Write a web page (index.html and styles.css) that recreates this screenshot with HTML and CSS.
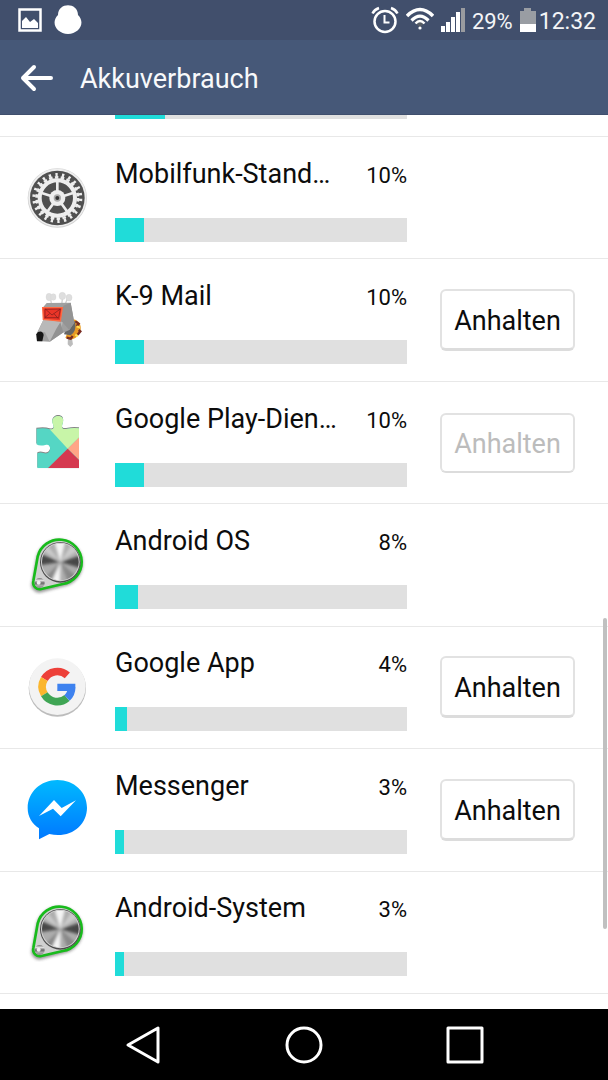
FILE: index.html
```html
<!DOCTYPE html>
<html lang="de">
<head>
<meta charset="utf-8">
<meta name="viewport" content="width=device-width, initial-scale=1">
<title>Akkuverbrauch</title>
<link rel="stylesheet" href="styles.css">
</head>
<body>
<svg class="defs" aria-hidden="true">
  <defs>
    <linearGradient id="steel" x1="0" y1="0" x2="0" y2="1">
      <stop offset="0" stop-color="#777"/><stop offset=".25" stop-color="#ddd"/><stop offset=".5" stop-color="#666"/><stop offset=".75" stop-color="#aaa"/><stop offset="1" stop-color="#888"/>
    </linearGradient>
    <filter id="soft" x="-20%" y="-20%" width="140%" height="140%"><feGaussianBlur stdDeviation="4"/></filter>
    <clipPath id="disc"><circle cx="151" cy="141" r="55"/></clipPath>
    <symbol id="pulley" viewBox="51 60 180 180">
      <path d="M70 200L83 127A67 67 0 1 1 158 211L94 228A20 20 0 0 1 70 200Z" fill="#333" stroke="#333" stroke-width="8" opacity=".5" filter="url(#soft)"/>
      <path d="M70 198L83 125A67 67 0 1 1 158 207L94 222A20 20 0 0 1 70 198Z" fill="#d0d0d0" stroke="#18bb1c" stroke-width="8"/>
      <circle cx="151" cy="142" r="61" fill="#4c4c4c"/>
      <circle cx="151" cy="141" r="58" fill="#d2d2d2"/>
      <g clip-path="url(#disc)">
        <path d="M90 80h122v122H90z" fill="#adadad"/>
        <g filter="url(#soft)">
          <path d="M151 141L80 112V152ZM151 141L222 118V162Z" fill="#474747"/>
          <path d="M151 141L130 70H168ZM151 141L110 212H150Z" fill="#f4f4f4"/>
          <path d="M151 141L94 198L116 218ZM151 141L178 212L205 190Z" fill="#888"/>
          <path d="M151 141L190 80L214 100ZM151 141L90 100L104 80Z" fill="#ccc"/>
        </g>
      </g>
      <circle cx="89" cy="204" r="15" fill="url(#steel)"/>
      <circle cx="86" cy="203" r="6" fill="#eee"/>
    </symbol>
  </defs>
</svg>
<div class="screen">
  <div class="status">
    <div class="status-group notices">
      <svg width="24" height="24" viewBox="0 0 24 24" fill="none"><path d="M1.5 1.5h21v21h-21z" stroke="#fff" stroke-width="2.5"/><path d="M4 20v-7l4-4 4 5 4-3 4 4v5z" fill="#fff"/></svg>
      <svg width="28" height="30" viewBox="0 0 28 30"><path d="M4 10C4-3 24-3 24 10C32 18 25 29 14 29S-4 18 4 10Z" fill="#fff"/></svg>
    </div>
    <div class="status-group">
      <svg width="28" height="28" viewBox="0 0 28 28" fill="none" stroke="#fff"><circle cx="14" cy="15.5" r="10.5" stroke-width="2.5"/><path d="M13.500 9v7.500h5" stroke-width="2"/><path d="M1.500 7.500C3 4.500 5 3 8 2M26.500 7.500C25 4.500 23 3 20 2" stroke-width="2.500"/></svg>
      <svg width="28" height="28" viewBox="1 1 28 28" fill="none" stroke="#fff"><path d="M2 11Q15-2 28 11" stroke-width="3.500"/><path d="M6.500 15.500Q15 7 23.500 15.500" stroke-width="3.200"/><path d="M10 17Q15 12 20 17L15 23Z" fill="#555c66" stroke="none"/><path d="M10.500 18.500Q15 13.500 19.500 18.500" stroke-width="2.500"/><circle cx="15" cy="23" r="1.600" fill="#fff" stroke="none"/></svg>
      <svg width="24" height="24" viewBox="0 0 24 24" fill="#fff"><path d="M0 18h4v6H0zM5 14h4v10H5zM10 9h4v15h-4zM15 4h4v20h-4z"/><path d="M20 0h4v24h-4z" fill="#999b9f"/></svg>
      <span class="charge">29%</span>
      <svg width="16" height="24" viewBox="0 0 16 24"><path d="M0 3h4V0h7v3h5v14H0z" fill="#999da3"/><path d="M0 16h16v8H0z" fill="#fff"/></svg>
      <span class="clock">12:32</span>
    </div>
  </div>
  <header class="bar">
    <button class="back" type="button" aria-label="Zurück"><svg width="34" height="28" viewBox="0 0 34 28" fill="none" stroke="#fff" stroke-width="4" stroke-linecap="round" stroke-linejoin="round"><path d="M14 3L3 14l11 11M3 14h28"/></svg></button>
    <h1 class="title">Akkuverbrauch</h1>
  </header>
  <main class="list">
    <div class="partial"><progress class="usage" max="100" value="17" aria-label="Verbrauch"></progress></div>

    <section class="row">
      <svg class="icon" viewBox="51 54 180 180">
        <circle cx="142" cy="144" r="89" fill="#d2d2d2"/><circle cx="142" cy="143" r="87" fill="#eee"/><circle cx="142" cy="144" r="82" fill="#505050"/>
        <g fill="none" stroke="#eee"><circle cx="142" cy="144" r="53" stroke-width="12"/><circle cx="142" cy="144" r="62" stroke-width="8" pathLength="44" stroke-dasharray="1.200 .8"/><circle cx="142" cy="144" r="70" stroke-width="10" pathLength="44" stroke-dasharray=".7 1.300" stroke-dashoffset="-.25"/>
        <path d="M142 144V94M142 144l47-15M142 144l29 40M142 144l-29 40M142 144l-47-15" stroke-width="8"/></g>
        <circle cx="142" cy="144" r="24" fill="#eee"/><circle cx="142" cy="144" r="11" fill="#aaa"/><circle cx="142" cy="144" r="6" fill="#333"/>
      </svg>
      <div class="info"><h2 class="name">Mobilfunk-Stand…</h2><span class="percent">10%</span><progress class="usage" max="100" value="10" aria-label="Mobilfunk-Standby"></progress></div>
    </section>

    <section class="row">
      <svg class="icon" viewBox="51 61 180 180">
        <g fill="#dedede" stroke="#d0d0d0"><path d="M121 84l4 22M158 82l-3 23M172 87l-7 18" stroke-width="4"/><ellipse cx="117" cy="82" rx="9" ry="11"/><ellipse cx="130" cy="82" rx="8" ry="10"/><ellipse cx="157" cy="79" rx="10" ry="11"/><ellipse cx="177" cy="84" rx="9" ry="10"/></g>
        <path d="M174 205l12 2 3 17-8 8-8-8z" fill="#bcbcbc"/>
        <path d="M190 149C224 155 218 206 180 210L166 204Z" fill="#e99a25"/>
        <path d="M196 155l10 7-6 7M206 181l5 4-8 10M188 199l-6 8-12-3" stroke="#782d23" stroke-width="7" fill="none"/><path d="M200 170l10 4M196 195l7 5" stroke="#ffe254" stroke-width="6"/>
        <path d="M172 164L195 155Q201 184 182 197L162 194Z" fill="#666"/>
        <path d="M110 100L182 99L193 159L178 181L158 190L119 216L81 214L79 194L101 149L98 114Z" fill="#a0a0a0"/>
        <path d="M160 108L182 99L193 159L178 181L151 151Z" fill="#949494"/>
        <path d="M101 149L158 158L152 188L119 216L105 188L84 186Z" fill="#b9b9b9"/>
        <path d="M151 158L160 188L119 216L139 177Z" fill="#929292"/>
        <path d="M84 187Q98 181 101 196L97 215H81L79 194Z" fill="#151515"/>
        <path d="M98 114L157 114L151 154L100 149Z" fill="#eb3528" stroke="#ff6b42" stroke-width="4"/>
        <path d="M106 118L126 136L151 118M104 144L119 132M145 147L132 132M105 119V144H146L151 118Z" fill="none" stroke="#751d1b" stroke-width="2"/>
      </svg>
      <div class="info"><h2 class="name">K-9 Mail</h2><span class="percent">10%</span><progress class="usage" max="100" value="10" aria-label="K-9 Mail"></progress></div>
      <button class="stop" type="button">Anhalten</button>
    </section>

    <section class="row">
      <svg class="icon" viewBox="51 53 180 180">
        <defs><clipPath id="piece"><path id="edge" d="M79 100Q104 96 119 102Q137 105 129 87C116 57 169 51 158 84C151 105 163 101 173 100Q190 96 207 99V219H82V174Q91 169 100 173C126 182 126 141 106 149Q89 153 79 147Z"/></clipPath></defs>
        <use href="#edge" y="-3" fill="#858585"/>
        <g clip-path="url(#piece)"><path d="M70 50h150v180H70z" fill="#55d6c4"/><path d="M112 94V50h110v62l-49 48z" fill="#c8f5a8"/><path d="M222 112v96l-49-48z" fill="#ffa586"/><path d="M173 160l60 60H112z" fill="#d53950"/></g>
      </svg>
      <div class="info"><h2 class="name">Google Play-Dien…</h2><span class="percent">10%</span><progress class="usage" max="100" value="10" aria-label="Google Play-Dienste"></progress></div>
      <button class="stop" type="button" disabled>Anhalten</button>
    </section>

    <section class="row">
      <svg class="icon"><use href="#pulley"/></svg>
      <div class="info"><h2 class="name">Android OS</h2><span class="percent">8%</span><progress class="usage" max="100" value="8" aria-label="Android OS"></progress></div>
    </section>

    <section class="row">
      <svg class="icon" viewBox="51 52 180 180">
        <circle cx="142" cy="145" r="86" fill="#bcbcbc"/><circle cx="142" cy="141" r="85" fill="#f3f3f3"/>
        <g fill="none" stroke-width="23"><path d="M172 107A45 45 0 0 0 103 118" stroke="#ed4039"/><path d="M103 118A45 45 0 0 0 103 164" stroke="#fbb62d"/><path d="M103 164A45 45 0 0 0 171 175" stroke="#3fa554"/><path d="M171 175A45 45 0 0 0 185 143" stroke="#3e82ef"/></g>
        <path d="M142 132h54v12l-8 10h-46z" fill="#3e82ef"/>
      </svg>
      <div class="info"><h2 class="name">Google App</h2><span class="percent">4%</span><progress class="usage" max="100" value="4" aria-label="Google App"></progress></div>
      <button class="stop" type="button">Anhalten</button>
    </section>

    <section class="row">
      <svg class="icon" viewBox="51 59 180 180">
        <defs><linearGradient id="blue" x1="0" y1="0" x2="0" y2="1"><stop stop-color="#00b9ff"/><stop offset="1" stop-color="#0078ff"/></linearGradient></defs>
        <path d="M142 59C92 59 53 96 53 143C53 169 66 190 87 204V237L118 221C180 236 231 196 231 142C231 95 192 59 142 59Z" fill="url(#blue)"/><path d="M87 167L132 119L155 143L198 120L152 168L129 145Z" fill="#fff"/>
      </svg>
      <div class="info"><h2 class="name">Messenger</h2><span class="percent">3%</span><progress class="usage" max="100" value="3" aria-label="Messenger"></progress></div>
      <button class="stop" type="button">Anhalten</button>
    </section>

    <section class="row">
      <svg class="icon"><use href="#pulley"/></svg>
      <div class="info"><h2 class="name">Android-System</h2><span class="percent">3%</span><progress class="usage" max="100" value="3" aria-label="Android-System"></progress></div>
    </section>
    <div class="scroll-thumb"></div>
  </main>
  <nav class="nav">
    <button class="key" type="button" aria-label="Zurück"><svg width="40" height="40" viewBox="0 0 40 40"><path d="M5 20L35 3v34z"/></svg></button>
    <button class="key" type="button" aria-label="Startseite"><svg width="40" height="40" viewBox="0 0 40 40"><circle cx="20" cy="20" r="17"/></svg></button>
    <button class="key" type="button" aria-label="Übersicht"><svg width="40" height="40" viewBox="0 0 40 40"><path d="M3 3h34v34H3z"/></svg></button>
  </nav>
</div>
</body>
</html>
```

FILE: styles.css
```css
* { box-sizing: border-box; }
body { margin: 0; font-family: Roboto, "Liberation Sans", sans-serif; color: #0c0c0c; background: #fff; }
button { font: inherit; color: inherit; padding: 0; border: 0; background: none; }
svg { display: block; flex: none; }
.defs { position: absolute; width: 0; height: 0; }
.screen { min-height: 100vh; display: flex; flex-direction: column; }
.status { height: 40px; padding: 0 12px 0 18px; display: flex; align-items: center; justify-content: space-between; background: #414f6c; color: #f4f5f7; }
.status-group { display: flex; align-items: center; gap: 7px; }
.notices { gap: 12px; }
.charge { font-size: 22px; padding-top: 2px; }
.clock { font-size: 23px; margin-left: -4px; padding-top: 2px; }
.bar { height: 75px; padding: 2px 20px 0; display: flex; align-items: center; gap: 26px; background: #465878; border-bottom: 1px solid #3f4f6d; color: #f8f9fb; }
.title { margin: 0; padding-top: 2px; font-size: 27px; line-height: 32px; font-weight: 400; }
.list { position: relative; flex: 1; display: flex; flex-direction: column; padding-bottom: 15px; }
.partial { height: 22px; padding-left: 115px; border-bottom: 1px solid #e8e8e8; }
.partial .usage { width: 292px; height: 4px; }
.row { flex: 1; min-height: 110px; display: grid; grid-template-columns: 60px minmax(0, 292fr) minmax(135px, 135fr); column-gap: 33px; padding: 0 33px 0 27px; align-items: center; border-bottom: 1px solid #e8e8e8; }
.icon { width: 60px; height: 60px; }
.info { margin-left: -5px; padding-top: 4px; display: grid; grid-template-columns: 1fr auto; row-gap: 26px; align-items: baseline; }
.name { margin: 0; font-size: 27px; line-height: 32px; font-weight: 400; white-space: nowrap; }
.percent { font-size: 22px; line-height: 32px; }
.usage { display: block; grid-column: 1 / -1; appearance: none; width: 100%; height: 24px; border: 0; background: #e0e0e0; }
.usage::-webkit-progress-bar { background: #e0e0e0; }
.usage::-webkit-progress-value { background: #20dcd9; }
.usage::-moz-progress-bar { background: #20dcd9; }
.stop { height: 62px; padding-top: 3px; border: 2px solid #e2e2e2; border-bottom: 3px solid #dcdcdc; border-radius: 6px; background: #fff; font-size: 27px; }
.stop:disabled { height: 60px; border-bottom-width: 2px; color: #bcbcbc; }
.scroll-thumb { position: absolute; right: 1px; top: 56.3%; height: 34.8%; width: 4px; border-radius: 2px; background: #c0c0c0; }
.nav { height: 71px; padding: 0 63px; display: grid; grid-template-columns: repeat(3, 1fr); background: #000; }
.key { display: flex; align-items: center; justify-content: center; }
.key svg { fill: none; stroke: #fff; stroke-width: 3; stroke-linejoin: round; }
```
